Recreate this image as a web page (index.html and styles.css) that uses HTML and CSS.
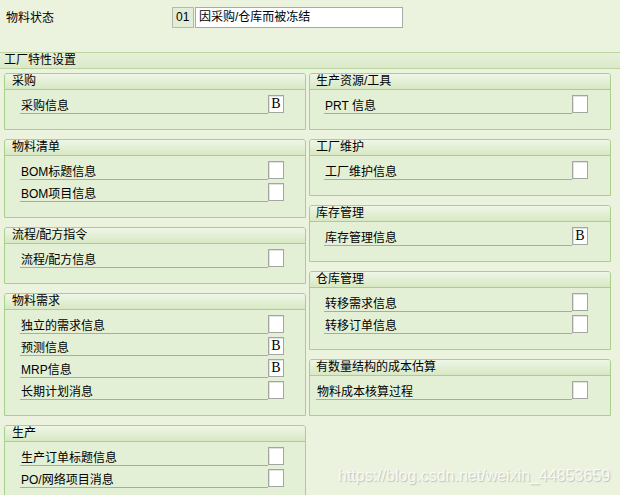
FILE: index.html
```html
<!DOCTYPE html>
<html lang="zh">
<head>
<meta charset="utf-8">
<title>物料状态</title>
<link rel="stylesheet" href="styles.css">
</head>
<body>
<div class="page">
  <div class="status-row">
    <span class="status-label">物料状态</span>
    <span class="code-box">01</span>
    <span class="text-box">因采购/仓库而被冻结</span>
  </div>

  <div class="band">工厂特性设置</div>

  <div class="columns">
    <div class="col">
      <div class="frame">
        <div class="frame-head">采购</div>
        <div class="frame-body">
          <div class="row"><span class="lbl">采购信息</span><span class="chk">B</span></div>
        </div>
      </div>
      <div class="frame">
        <div class="frame-head">物料清单</div>
        <div class="frame-body">
          <div class="row"><span class="lbl">BOM标题信息</span><span class="chk"></span></div>
          <div class="row"><span class="lbl">BOM项目信息</span><span class="chk"></span></div>
        </div>
      </div>
      <div class="frame">
        <div class="frame-head">流程/配方指令</div>
        <div class="frame-body">
          <div class="row"><span class="lbl">流程/配方信息</span><span class="chk"></span></div>
        </div>
      </div>
      <div class="frame">
        <div class="frame-head">物料需求</div>
        <div class="frame-body">
          <div class="row"><span class="lbl">独立的需求信息</span><span class="chk"></span></div>
          <div class="row"><span class="lbl">预测信息</span><span class="chk">B</span></div>
          <div class="row"><span class="lbl">MRP信息</span><span class="chk">B</span></div>
          <div class="row"><span class="lbl">长期计划消息</span><span class="chk"></span></div>
        </div>
      </div>
      <div class="frame">
        <div class="frame-head">生产</div>
        <div class="frame-body">
          <div class="row"><span class="lbl">生产订单标题信息</span><span class="chk"></span></div>
          <div class="row"><span class="lbl">PO/网络项目消息</span><span class="chk"></span></div>
        </div>
      </div>
    </div>

    <div class="col col-right">
      <div class="frame">
        <div class="frame-head">生产资源/工具</div>
        <div class="frame-body">
          <div class="row"><span class="lbl">PRT 信息</span><span class="chk"></span></div>
        </div>
      </div>
      <div class="frame">
        <div class="frame-head">工厂维护</div>
        <div class="frame-body">
          <div class="row"><span class="lbl">工厂维护信息</span><span class="chk"></span></div>
        </div>
      </div>
      <div class="frame">
        <div class="frame-head">库存管理</div>
        <div class="frame-body">
          <div class="row"><span class="lbl">库存管理信息</span><span class="chk">B</span></div>
        </div>
      </div>
      <div class="frame">
        <div class="frame-head">仓库管理</div>
        <div class="frame-body">
          <div class="row"><span class="lbl">转移需求信息</span><span class="chk"></span></div>
          <div class="row"><span class="lbl">转移订单信息</span><span class="chk"></span></div>
        </div>
      </div>
      <div class="frame">
        <div class="frame-head">有数量结构的成本估算</div>
        <div class="frame-body frame-body-narrow">
          <div class="row"><span class="lbl">物料成本核算过程</span><span class="chk"></span></div>
        </div>
      </div>
    </div>
  </div>

  <div class="watermark">https://blog.csdn.net/weixin_44853659</div>
</div>
</body>
</html>
```

FILE: styles.css
```css
html, body {
  margin: 0;
  padding: 0;
  background: #ebf3df;
}

body {
  font-family: "Liberation Sans", "Noto Sans CJK SC", sans-serif;
  font-size: 12px;
  color: #000;
  width: 620px;
  height: 495px;
  overflow: hidden;
}

.page {
  position: relative;
  width: 620px;
  height: 495px;
  overflow: hidden;
}

.status-row {
  display: flex;
  align-items: center;
  height: 21px;
  padding-top: 7px;
}

.status-label {
  width: 166px;
  padding-left: 6px;
  line-height: 16px;
}

.code-box {
  box-sizing: border-box;
  width: 22px;
  height: 21px;
  line-height: 19px;
  padding-left: 3px;
  background: #e3ecd6;
  border: 1px solid #b4b8ae;
}

.text-box {
  box-sizing: border-box;
  width: 208px;
  height: 21px;
  line-height: 19px;
  margin-left: 1px;
  padding-left: 3px;
  background: #fff;
  border: 1px solid #a9aca6;
}

.band {
  box-sizing: border-box;
  margin-top: 24px;
  height: 17px;
  line-height: 15px;
  padding-left: 4px;
  background: linear-gradient(#e6f0da, #dbe9ca);
  border-top: 1px solid #b9d5a0;
  border-bottom: 1px solid #b9d5a0;
}

.columns {
  display: grid;
  grid-template-columns: 302px 302px;
  column-gap: 3px;
  padding-left: 4px;
  margin-top: 4px;
}

.col {
  display: flex;
  flex-direction: column;
  gap: 9px;
}

.frame {
  border: 1px solid #a9cf8c;
  border-radius: 3px 3px 0 0;
  background: #e4f0d5;
}

.frame-head {
  height: 15px;
  line-height: 15px;
  padding-left: 7px;
  background: linear-gradient(#eef6e6, #d8e8c4);
  border-bottom: 1px solid #a9cf8c;
  border-radius: 2px 2px 0 0;
}

.col-right .frame-head {
  padding-left: 6px;
}

.frame-body {
  padding: 2px 21px 15px 15px;
}

.col-right .frame-body {
  padding-left: 14px;
  padding-right: 22px;
}

.col-right .frame-body-narrow {
  padding-left: 6px;
}

.row {
  display: flex;
  align-items: flex-end;
  height: 22px;
}

.lbl {
  flex: 1;
  height: 21px;
  display: flex;
  align-items: flex-end;
  line-height: 14px;
  padding-left: 1px;
  border-bottom: 1px solid #a8aaa4;
}

.chk {
  box-sizing: border-box;
  width: 16px;
  height: 18px;
  margin-bottom: 1px;
  background: #fff;
  border: 1px solid #a4a6a2;
  box-shadow: inset 1px 1px 0 #e2e2e2;
  font-family: "Liberation Serif", serif;
  font-size: 14px;
  line-height: 16px;
  text-align: center;
}

.watermark {
  position: absolute;
  left: 338px;
  top: 467px;
  font-family: "Liberation Sans", sans-serif;
  font-size: 16px;
  line-height: 18px;
  color: rgba(255, 255, 255, 0.8);
  text-shadow: 1px 1px 1px rgba(110, 110, 110, 0.35);
  white-space: nowrap;
}
```
